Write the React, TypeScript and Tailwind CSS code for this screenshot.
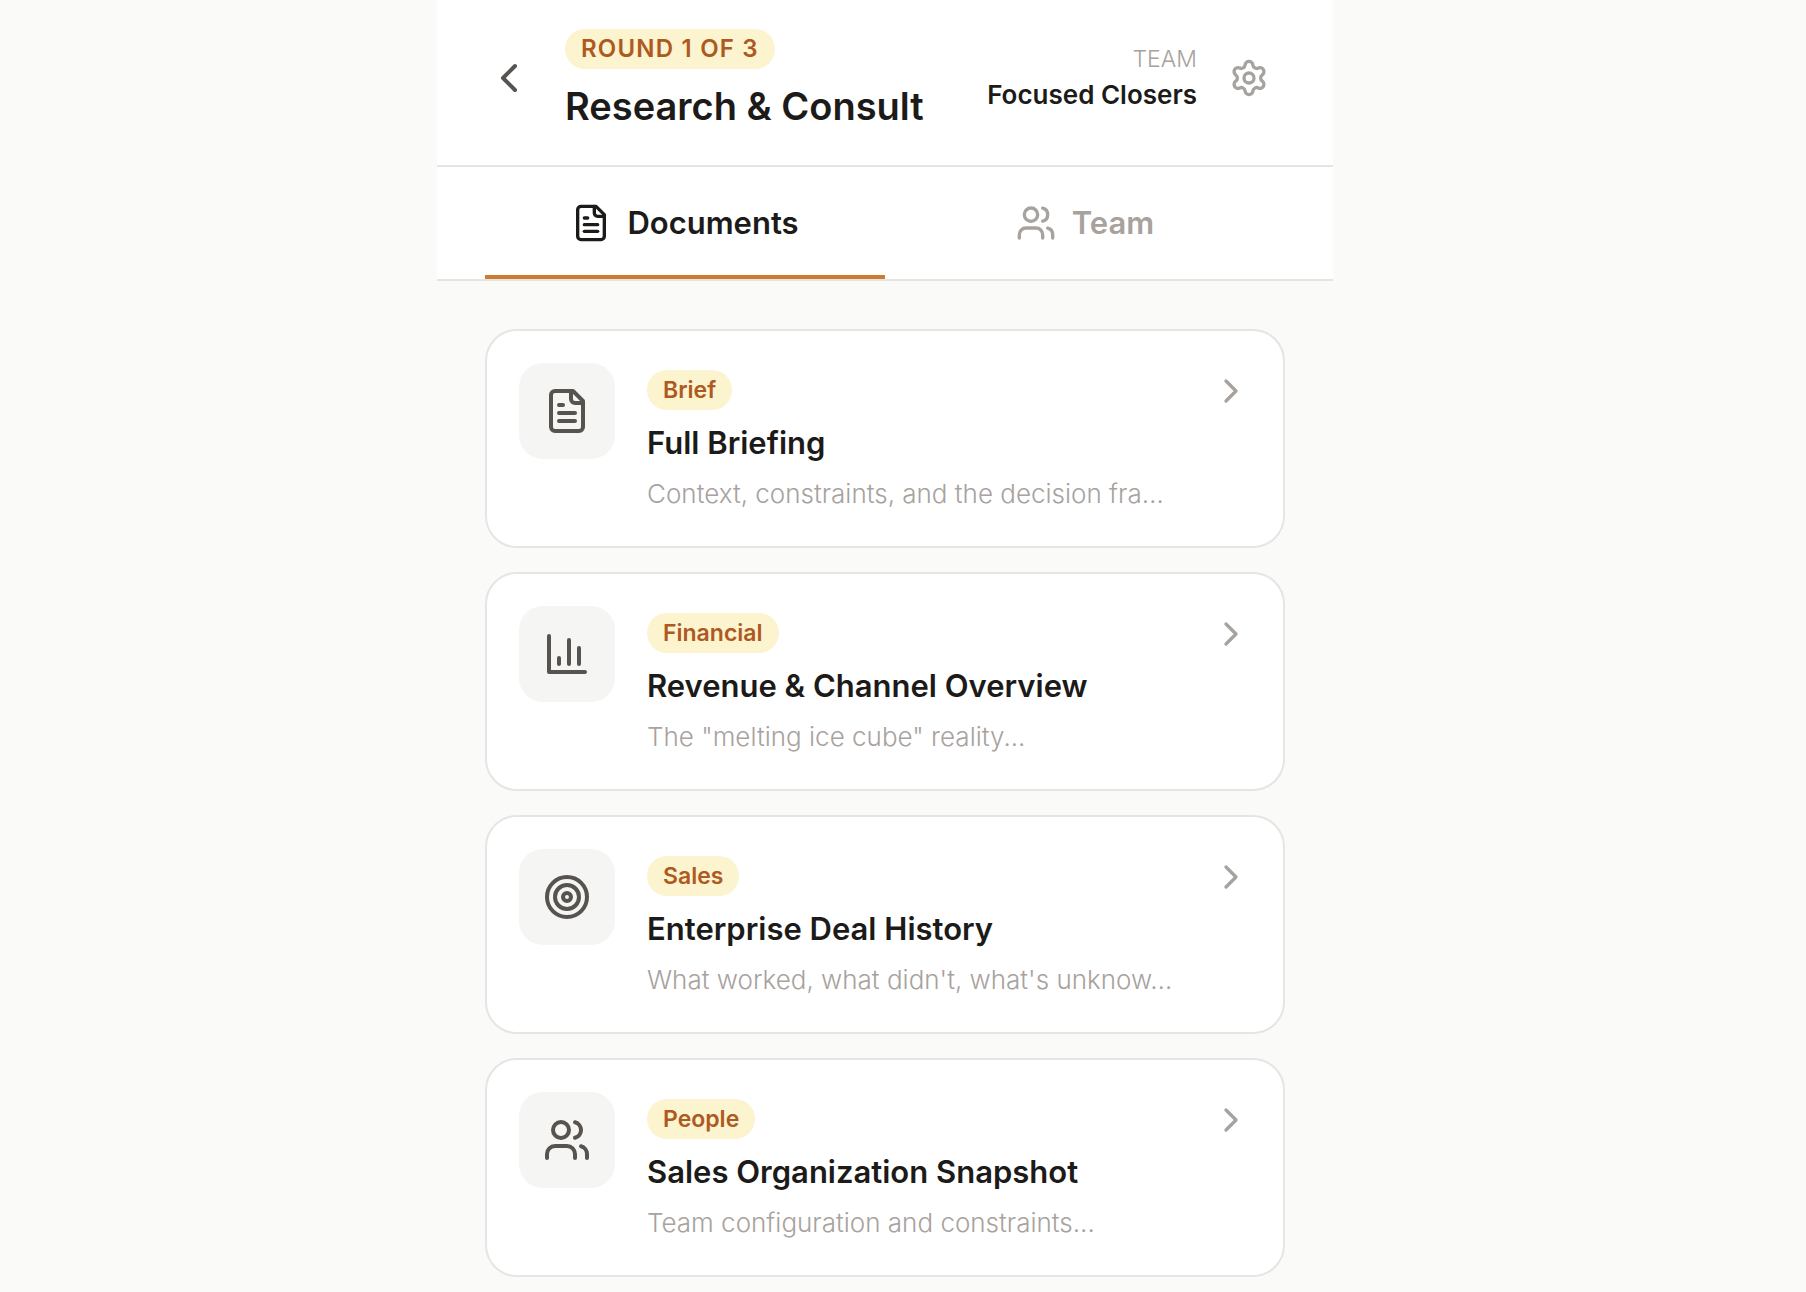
import type { ReactNode } from "react";
import { ChevronLeft, ChevronRight, Settings, Target } from "lucide-react";

type IconProps = { className?: string };

function Icon({ className, children }: { className?: string; children: ReactNode }) {
  return (
    <svg
      viewBox="0 0 24 24"
      fill="none"
      stroke="currentColor"
      strokeWidth="2"
      strokeLinecap="round"
      strokeLinejoin="round"
      aria-hidden="true"
      className={className}
    >
      {children}
    </svg>
  );
}

function FileIcon({ className }: IconProps) {
  return (
    <Icon className={className}>
      <path d="M15 2H6a2 2 0 0 0-2 2v16a2 2 0 0 0 2 2h12a2 2 0 0 0 2-2V7Z" />
      <path d="M14 2v4a2 2 0 0 0 2 2h4" />
      <path d="M10 9H8" />
      <path d="M16 13H8" />
      <path d="M16 17H8" />
    </Icon>
  );
}

function ChartIcon({ className }: IconProps) {
  return (
    <Icon className={className}>
      <path d="M3 3v18h18" />
      <path d="M18 17V9" />
      <path d="M13 17V5" />
      <path d="M8 17v-3" />
    </Icon>
  );
}

function UsersIcon({ className }: IconProps) {
  return (
    <Icon className={className}>
      <path d="M16 21v-2a4 4 0 0 0-4-4H6a4 4 0 0 0-4 4v2" />
      <circle cx="9" cy="7" r="4" />
      <path d="M22 21v-2a4 4 0 0 0-3-3.87" />
      <path d="M16 3.13a4 4 0 0 1 0 7.75" />
    </Icon>
  );
}

const documents = [
  {
    tag: "Brief",
    title: "Full Briefing",
    summary: "Context, constraints, and the decision fra…",
    icon: FileIcon,
  },
  {
    tag: "Financial",
    title: "Revenue & Channel Overview",
    summary: 'The "melting ice cube" reality...',
    icon: ChartIcon,
  },
  {
    tag: "Sales",
    title: "Enterprise Deal History",
    summary: "What worked, what didn't, what's unknow…",
    icon: Target,
  },
  {
    tag: "People",
    title: "Sales Organization Snapshot",
    summary: "Team configuration and constraints...",
    icon: UsersIcon,
  },
];

function DocumentCard({ tag, title, summary, icon: DocIcon }: (typeof documents)[number]) {
  return (
    <button
      type="button"
      className="flex w-full items-start gap-8 rounded-[32px] border-2 border-[#e5e5e4] bg-white p-8 text-left"
    >
      <span className="flex size-24 shrink-0 items-center justify-center rounded-3xl bg-[#f5f5f4] text-[#57534e]">
        <DocIcon className="size-12" />
      </span>
      <span className="flex min-w-0 flex-1 flex-col items-start pt-[7px]">
        <span className="rounded-full bg-[#fcf3cf] px-4 text-[23px]/10 font-semibold text-[#ad5a22]">
          {tag}
        </span>
        <span className="mt-2 text-[31px]/[50px] font-semibold text-[#1c1b19]">{title}</span>
        <span className="mt-1.5 w-full truncate text-[26px]/10 font-light text-[#a8a29e]">
          {summary}
        </span>
      </span>
      <ChevronRight className="mt-2 size-10 shrink-0 text-[#a8a29e]" />
    </button>
  );
}

export default function App() {
  return (
    <div className="h-screen overflow-hidden bg-[#fafaf9] pr-9 font-['Inter',sans-serif] text-[#1c1b19]">
      <div className="mx-auto max-w-4xl">
        <header className="flex items-center border-b-2 border-[#e5e5e4] bg-white px-12 pt-[29px] pb-[38px]">
          <button type="button" aria-label="Back" className="mr-8 text-[#57534e]">
            <ChevronLeft className="size-12" />
          </button>
          <div className="flex min-w-0 flex-1 flex-col items-start">
            <span className="rounded-full bg-[#fcf3cf] px-4 text-2xl/10 font-semibold tracking-wider text-[#ad5a22] uppercase">
              Round 1 of 3
            </span>
            <h1 className="mt-4 text-[38px]/[42px] font-semibold whitespace-nowrap">
              Research &amp; Consult
            </h1>
          </div>
          <div className="mr-4 text-right whitespace-nowrap">
            <p className="text-[23px]/[34px] font-light text-[#a8a29e] uppercase">Team</p>
            <p className="text-[26px]/[38px] font-semibold">Focused Closers</p>
          </div>
          <button type="button" aria-label="Settings" className="p-4 text-[#a8a29e]">
            <Settings className="size-10" />
          </button>
        </header>

        <nav className="flex border-b-2 border-[#e5e5e4] bg-white px-12">
          <button
            type="button"
            className="relative flex flex-1 items-center justify-center gap-4 py-9 text-[31px]/10 font-semibold"
          >
            <FileIcon className="size-10" />
            Documents
            <span className="absolute inset-x-0 bottom-0 h-1 bg-[#cd7c2f]" />
          </button>
          <button
            type="button"
            className="flex flex-1 items-center justify-center gap-4 py-9 text-[31px]/10 font-semibold text-[#a8a29e]"
          >
            <UsersIcon className="size-10" />
            Team
          </button>
        </nav>

        <main className="flex flex-col gap-6 px-12 py-12">
          {documents.map((doc) => (
            <DocumentCard key={doc.title} {...doc} />
          ))}
        </main>
      </div>
    </div>
  );
}
